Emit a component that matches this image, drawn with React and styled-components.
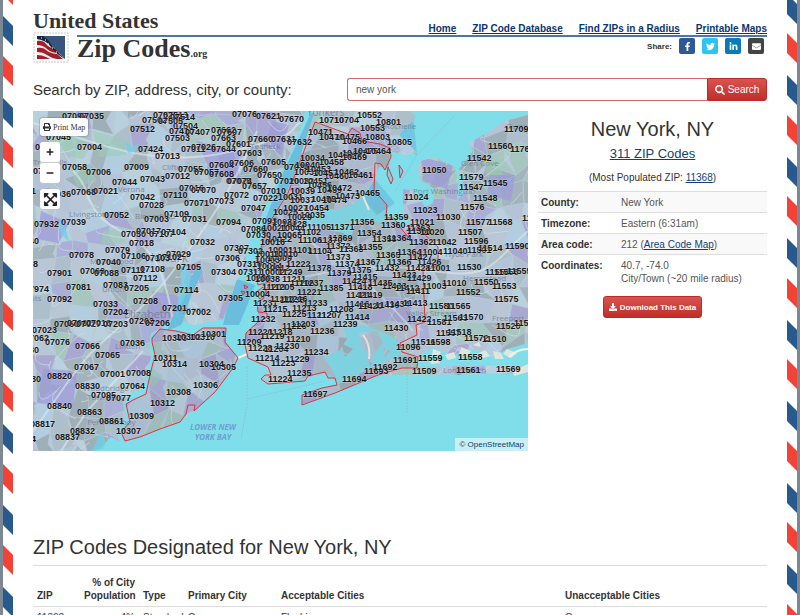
import React, { useState } from "react";
import styled, { createGlobalStyle } from "styled-components";
import {
  FaSearch,
  FaDownload,
  FaPrint,
  FaFacebookF,
  FaTwitter,
  FaLinkedinIn,
  FaEnvelope,
  FaPlus,
  FaMinus,
  FaExpandArrowsAlt,
} from "react-icons/fa";

const GlobalStyle = createGlobalStyle`
  * {
    box-sizing: border-box;
  }
  html {
    scrollbar-width: none;
  }
  body {
    margin: 0;
    background: #7b8793;
    color: #333;
    font-family: "Liberation Sans", Arial, sans-serif;
    font-size: 10px;
    line-height: 13px;
  }
  h1, h2, p {
    margin: 0;
    font-weight: normal;
  }
  a {
    color: #0f3f73;
  }
`;

// "zip x y" for every label on the map, x = left edge, y = baseline
const zips = `
07097 29 8,07035 46 8,07502 109 12,07522 120 7,07513 130 7,07514 137 9,07512 97 21,07503 132 30,07504 140 18,
07505 125 13,07410 136 23,07407 152 24,07662 178 22,07663 178 30,07045 13 29,07004 44 39,07424 105 41,07011 148 41,
07026 158 39,07644 178 41,07013 122 48,07054 2 39,07058 29 59,07006 53 64,07009 91 59,07055 145 61,07604 176 57,
07057 161 64,07608 176 66,07034 0 63,07044 79 74,07043 107 71,07012 132 68,07075 193 73,07981 -22 83,07936 13 86,
07068 38 84,07021 60 83,07042 97 89,07110 130 87,07016 146 80,07070 158 82,07028 106 97,07071 151 95,07073 176 93,
07052 71 107,07109 131 106,07003 111 111,07031 149 111,07094 183 114,07932 1 116,07039 28 114,07050 88 126,
07017 103 123,07107 116 126,07104 128 124,07018 96 135,07032 157 134,07940 -19 133,07078 36 147,07079 72 142,
07106 88 148,07029 133 146,07102 124 149,07103 112 150,07306 182 150,07928 -20 156,07901 14 165,07040 63 154,
07060 47 163,07088 61 165,07111 88 162,07108 107 161,07105 143 159,07304 178 164,07112 100 170,07974 -9 181,
07081 33 179,07083 70 177,07205 91 180,07114 141 182,07305 185 190,07092 14 191,07033 60 196,07208 100 193,
07204 70 204,07201 129 200,07002 153 204,07060 21 216,07062 34 215,07027 43 216,07016 53 215,07203 70 216,
07202 96 213,07206 112 215,07023 -1 222,07062 -9 230,07076 12 234,07066 42 238,07036 87 235,07065 62 247,
10303 129 230,10302 143 229,10310 157 229,10301 168 226,07080 -19 242,07067 41 259,07001 67 266,07008 93 265,
07080 -17 271,08820 14 268,08830 42 278,07064 87 278,07095 58 287,07077 73 290,08840 14 298,08863 44 304,
08861 66 313,08817 -3 316,08832 37 323,08837 22 329,10307 83 323,10309 96 308,10312 117 295,10308 133 284,
10306 160 277,10305 178 259,10304 166 256,10314 129 256,10311 120 250,08854 -22 331,07076 199 6,07621 223 8,
07670 246 11,10710 286 12,10704 301 12,10552 324 7,10553 327 20,07607 184 24,07660 215 31,07631 238 31,
07632 254 34,10471 275 24,10470 286 29,10475 302 29,10466 309 33,10803 332 29,07601 193 36,07603 204 45,
10463 295 47,10467 309 45,10469 309 49,10475 320 43,07606 196 55,07605 228 54,07024 251 59,10034 267 50,
10040 262 57,10458 286 54,07660 210 61,07650 224 67,10033 261 64,10453 273 61,10460 291 68,10457 280 65,
10462 301 64,10461 315 67,07074 194 73,07657 209 78,07020 241 73,10032 256 73,10451 270 73,10456 274 77,
07010 228 83,10039 257 83,10459 284 82,10472 294 80,10465 322 85,07072 191 87,07022 220 90,10031 245 89,
10037 257 92,10455 278 91,10474 289 92,10473 302 88,07047 208 100,10025 240 104,10027 250 100,10454 271 100,
10035 267 107,10029 254 109,07093 219 113,10023 239 114,10128 249 116,11105 274 119,11371 297 119,11356 317 114,
10801 343 14,10805 354 34,10464 333 43,11709 471 21,11560 455 38,11764 477 41,11542 434 50,
11050 389 62,11579 426 69,11547 426 79,11545 450 75,11548 440 90,11024 371 89,11576 427 99,11023 380 102,
11030 403 109,11359 351 109,11021 377 114,11577 433 114,11568 455 114,11360 348 117,11791 489 110,11363 373 120,
07086 208 121,07030 213 127,10021 229 120,10044 247 120,11102 264 124,11369 295 130,11370 285 132,11106 265 132,
10022 234 131,10065 244 127,11354 324 125,07307 191 140,07302 205 143,10001 235 142,10016 227 134,11101 255 142,
11104 275 143,11372 293 138,11368 306 141,11355 325 139,07310 204 156,10003 222 152,10009 234 150,10011 222 146,
10010 240 146,10014 224 158,10012 232 160,11222 253 156,11373 293 149,11374 302 156,11367 323 154,11378 274 160,
11375 314 162,11379 294 165,07311 205 164,10002 227 164,11249 245 164,10280 213 170,10038 222 171,11211 249 171,
11206 257 175,11237 266 175,11201 229 179,11205 237 179,11221 264 184,11385 286 180,11418 315 179,11415 320 169,
11424 309 173,11421 313 187,11419 325 187,10004 212 186,11231 220 195,11217 237 191,11238 247 192,11216 250 191,
11233 270 195,11215 230 201,11213 259 200,11225 249 206,11212 274 207,11207 284 207,11208 296 201,11414 312 209,
11416 312 196,11420 325 198,11232 218 211,11226 249 218,11203 258 216,11239 300 216,11236 277 223,11220 215 224,
11218 235 224,11219 227 228,11210 253 231,11209 204 234,11361 374 123,11020 387 124,11507 425 124,11358 339 131,
11364 354 130,11362 376 134,11042 399 134,11596 431 133,11590 472 138,11365 343 147,11364 364 144,11004 385 144,
11040 410 143,11501 434 142,11514 445 140,11366 354 154,11426 384 154,11427 375 149,11432 342 160,11423 359 167,
11428 373 160,11001 393 160,11530 424 159,11554 452 164,11556 461 164,11555 474 163,11429 374 170,11003 389 178,
11010 409 175,11550 441 174,11553 459 178,11433 349 178,11435 335 175,11412 362 180,11411 373 183,11552 423 184,
11575 461 191,11436 342 197,11434 352 196,11413 370 195,11580 396 198,11565 413 198,11422 374 211,11581 394 214,
11563 410 210,11570 426 209,11520 463 218,11566 481 215,11430 351 220,11557 403 225,11518 414 224,11572 431 230,
11510 449 231,11516 378 234,11598 393 234,11228 215 240,11204 231 241,11230 242 238,11234 271 244,11214 222 250,
11223 238 255,11229 252 251,11235 254 265,11224 235 271,11697 270 286,11694 309 271,11693 331 263,11692 340 259,
11691 360 252,11559 385 250,11558 425 249,11561 423 262,11569 463 261,11509 379 263,11096 363 239`
  .split(",")
  .map((z) => z.trim().split(" "));

const places = [
  ["Clifton", 129, 59, 8],
  ["Livingston", 36, 106, 8],
  ["Verona", 85, 81, 8],
  ["Bloomfield", 102, 108, 8],
  ["Newark", 112, 151, 12],
  ["Maplewood", 57, 153, 8],
  ["Union", 69, 181, 8],
  ["Elizabeth", 91, 207, 11],
  ["Linden", 82, 238, 8],
  ["Woodbridge", 50, 280, 8],
  ["Township", 54, 289, 8],
  ["Perth Amboy", 54, 314, 8],
  ["Troy Hills", 0, 54, 8],
  ["Heights", -20, 190, 8],
  ["Teaneck", 217, 38, 8],
  ["Yonkers", 274, 5, 10],
  ["New Rochelle", 333, 18, 8],
  ["Glen Cove", 428, 55, 8],
  ["Port Washington", 380, 83, 8],
  ["Oyster Bay", 473, 18, 8],
  ["Hyde Park", 412, 146, 8],
  ["Hempstead", 430, 170, 8],
  ["Valley Stream", 373, 205, 8],
  ["Freeport", 459, 210, 8],
  ["Long Beach", 410, 262, 8],
  ["Bayonne", 140, 201, 8],
];

const land = [
  // New Jersey
  "M0 0H272L264 28 244 70 224 114 212 140 214 158 203 170 197 190 190 208 160 214 150 210 158 185 170 160 164 156 150 180 140 205 130 216 118 222 116 236 118 246 114 262 109 277 96 284 90 292 93 310 84 320 86 330 78 326 68 336 60 340H0Z",
  // Staten Island
  "M119 231L122 244 117 264 113 283 100 289 93 293 97 311 88 321 92 330 107 326 127 318 147 311 155 302 163 299 182 281 200 257 205 247 192 231 193 217 170 217 160 224 143 220 127 218 119 227Z",
  // Manhattan, the Bronx and Westchester
  "M282 0H378L384 7 372 16 366 24 384 42 372 44 350 38 357 42 356 56 346 56 341 70 334 78 322 92 306 98 288 98 272 106 258 132 244 158 230 172 222 168 224 150 236 116 260 68Z",
  // Long Island
  "M262 118L278 112 292 118 310 122 318 128 322 112 334 108 347 112 356 107 367 116 378 112 370 100 370 78 382 80 392 96 400 92 402 78 388 70 385 58 388 50 402 46 422 56 425 68 424 90 432 80 426 58 440 40 436 32 454 22 472 10 495 4V232L474 238 460 246 440 238 420 244 400 236 384 246V256L495 254V262L384 264 345 264 302 282 270 293 270 283 304 274 340 256 368 244 368 232 356 224 330 214 310 216 314 228 306 240 290 246 296 254 304 268 292 262 275 266 235 273 228 268 232 263 237 262 232 255 216 247 212 234 213 222 225 211 225 195 230 184 237 168 250 146Z",
  "M326 222L344 220 350 232 340 244 330 238ZM336 240L340 248 338 256 334 246ZM308 232L320 238 312 246ZM350 236L358 240 352 246Z",
].join("");

const cityLimits =
  "M282 11L315 23 319 17 327 22 329 30 347 33 357 37 358 46 352 59 348 53 342 52 341 79 347 86 354 94 353 107 361 107 367 116 375 126 377 114 388 120 405 136V149L402 156 390 159 392 211 383 214 384 224 367 232 369 241 385 246 384 257 369 257 345 264 302 282 269 294V284L289 277 304 274 302 267 295 267 292 261 275 265 272 270 235 273 228 268 232 264 238 264 235 256 215 247 212 234 213 222 225 211 234 206V202L225 201 224 191 230 188 237 171 225 174 221 157 229 134 235 114 255 82Z" +
  "M119 231L122 244 117 264 113 283 100 289 93 293 97 311 88 321 92 330 107 326 127 318 147 311 153 303 155 294 162 294 161 300 182 281 200 257 205 247 192 231 193 217 170 217 160 224 143 220 127 218 119 227Z" +
  "M355 56L360 68 358 73 354 64ZM366 54L370 60 367 67ZM222 182l8 -6 4 6 -7 6ZM211 174l4 2 -3 2ZM208 180l4 1 -2 3Z";

const shades = ["#a9afd6", "#a3b4bd", "#b3cde0", "#b9d0dd", "#9eafb8", "#b8c6d5", "#a8a8d2", "#a6c6c0", "#adbfca", "#b4c3d6"];

// patchwork of zip areas: a jittered grid, always the same
const rand = (a, b) => {
  const n = Math.sin(a * 127.1 + b * 311.7) * 43758.5453;
  return n - Math.floor(n);
};
const CELL = 19;
const corner = (c, r) =>
  `${Math.round(c * CELL + (rand(c, r) - 0.5) * 17)} ${Math.round(r * CELL + (rand(r + 40, c) - 0.5) * 17)}`;
const areas = [];
for (let r = -1; r < 19; r++) {
  for (let c = -1; c < 28; c++) {
    areas.push({
      d: `M${corner(c, r)}L${corner(c + 1, r)}L${Math.round((c + 1 + (rand(c, r + 9) - 0.5) / 2) * CELL)} ${Math.round((r + 0.5) * CELL)}L${corner(c + 1, r + 1)}L${corner(c, r + 1)}Z`,
      fill: shades[Math.floor(rand(c + 7, r + 3) * shades.length)],
    });
  }
}
const streets = [];
for (let i = 0; i < 190; i++) {
  const x = Math.round(rand(i, 1) * 495);
  const y = Math.round(rand(i, 2) * 340);
  streets.push(
    `M${x} ${y}q${Math.round(rand(i, 3) * 30 - 15)} ${Math.round(rand(i, 4) * 20)} ${Math.round(rand(i, 5) * 60 - 30)} ${Math.round(rand(i, 6) * 40 - 10)}`
  );
}

const ZipMap = () => (
  <MapSvg viewBox="0 0 495 340" role="img" aria-label="Map of New York ZIP Codes">
    <defs>
      <clipPath id="land">
        <path d={land} />
      </clipPath>
    </defs>
    <rect width="495" height="340" fill="#80deea" />
    <path d="M204 168L222 174 214 195 206 214 190 214 194 196ZM160 158L172 158 158 196 148 214 134 220 142 200ZM250 62L278 2 288 2 262 70 236 120 228 120Z" fill="#62afd9" opacity="0.7" />
    <path d="M380 4L384 44 356 34ZM342 68L330 88 344 104 362 92Z" fill="#6fc7e2" />
    <g clipPath="url(#land)">
      <rect width="495" height="340" fill="#b6cbd8" />
      {areas.map((a, i) => (
        <path key={i} d={a.d} fill={a.fill} stroke="#b9cbd9" strokeWidth="0.6" />
      ))}
      <path d="M24 30l20 -8 14 14 -8 12 -20 -4ZM60 20l30 8 4 16 -28 2ZM38 60l18 -6 8 16 -20 6ZM150 10l24 -4 -2 18 -20 4ZM70 120l20 -4 2 16 -24 2ZM112 266l8 -8 10 8 -10 10ZM450 50l14 -4 6 18 -14 6Z" fill="#9bcbb4" opacity="0.6" />
      <path d="M8 100l28 12 -10 20 -22 -4ZM164 30l36 10 8 30 -30 -8ZM120 180l28 6 -12 32 -24 -12ZM10 258l34 2 -4 36 -36 -4ZM240 10l16 4 -8 30 -18 -8ZM388 46l32 8 -6 24 -24 -8ZM456 64l26 0 -4 26 -24 -6Z" fill="#9d9bd8" opacity="0.75" />
      <path d={streets.join("")} fill="none" stroke="#d5e2ea" strokeWidth="1" opacity="0.6" />
      <path d="M40 60C60 78 50 100 84 118S130 150 140 210M0 12C60 30 120 60 200 40S250 20 270 10M0 320C30 280 40 260 60 240S110 200 140 160 200 80 224 20M250 170C300 160 340 150 400 160S460 150 495 120M240 110C280 130 340 170 380 220M28 340L54 300 110 240" fill="none" stroke="#dfe9ee" strokeWidth="2" opacity="0.6" />
    </g>
    <path d="M92 30l8 6 6 -4 -3 8 -8 2ZM26 108l6 8 4 14 -8 -6ZM66 322q10 6 4 16l-12 2q6 -8 8 -18ZM150 150q14 12 2 36t-10 30" fill="#6fd0e6" opacity="0.8" />
    <g fill="#dce8dd">
      <path d="M400 238l8 3 -3 5 -6 -2ZM412 244l9 -3 2 6 -8 2ZM428 236l10 4 -4 6 -8 -3ZM444 243l8 -4 5 6 -10 3ZM460 240l8 2 3 6 -9 0ZM474 238l10 4 -6 5 -8 -4ZM440 234l6 -3 2 5ZM396 250l10 -1 1 3 -8 1ZM480 260l15 -7 0 8 -14 4Z" />
    </g>
    <path d="M205 247L214 243M330 224q8 10 6 24M476 246q8 -8 19 -8M330 85l6 14" fill="none" stroke="#f4f1e6" strokeWidth="2" />
    <path d="M214 256V294L208 328M214 288L292 270M374 252V302M362 80L384 44 420 6" fill="none" stroke="#85b9c6" strokeDasharray="2 1" strokeWidth="0.6" />
    <PlaceNames>
      {places.map(([name, x, y, size]) => (
        <text key={name} x={x} y={y} fontSize={size}>
          {name}
        </text>
      ))}
    </PlaceNames>
    <BayName textAnchor="middle">
      <text x="180" y="319">LOWER NEW</text>
      <text x="180" y="329">YORK BAY</text>
    </BayName>
    <path d={cityLimits} fill="rgba(110, 110, 140, 0.1)" stroke="#e0303c" strokeWidth="1" strokeLinejoin="round" />
    <ZipLabels>
      {zips.map(([zip, x, y], i) => (
        <text key={i} x={x} y={y}>
          {zip}
        </text>
      ))}
    </ZipLabels>
  </MapSvg>
);

const AirmailEdge = ({ id, blue, red }) => (
  <Edge aria-hidden="true">
    <defs>
      <pattern id={id} width="10" height="163" patternUnits="userSpaceOnUse">
        {[-163, -81, 0, 82, 163].map((y) => (
          <g key={y}>
            <path d={`M0 ${y + blue}l10 10v20l-10 -10Z`} fill="#285a8e" />
            <path d={`M0 ${y + red}l10 10v20l-10 -10Z`} fill="#f44336" />
          </g>
        ))}
      </pattern>
    </defs>
    <rect width="10" height="100%" fill={`url(#${id})`} />
  </Edge>
);

const Stamp = () => (
  <StampSvg viewBox="0 0 36 31" aria-hidden="true">
    <rect x="1" y="1" width="34" height="29" fill="#fff" stroke="#c9c9c9" strokeWidth="1" strokeDasharray="2 1" />
    <clipPath id="stamp">
      <rect x="4" y="4" width="28" height="23" />
    </clipPath>
    <g clipPath="url(#stamp)">
      <rect x="4" y="4" width="28" height="23" fill="#36567e" />
      <path d="M4 4q6 -1 10 4q7 8 18 19H4Z" fill="#f3ece8" />
      <path d="M4 9q6 -1 9 3t10 5l3 4q-8 0 -12 -4t-10 -4ZM4 16q6 -1 9 2t11 4l6 5h-6q-6 -1 -10 -4t-10 -3ZM4 23q5 0 9 2l4 2H4Z" fill="#a51d2b" />
      <path d="M4 4h6q5 3 8 8t14 15q-9 -5 -14 -12T4 7Z" fill="#17253f" />
      <path d="M8 6h1M12 8h1M15 12h1M19 16h1M23 20h1" stroke="#fff" strokeWidth="1" />
    </g>
  </StampSvg>
);

const App = () => {
  const [query, setQuery] = useState("new york");

  return (
    <Page>
      <GlobalStyle />
      <AirmailEdge id="edge-left" blue={16} red={56} />
      <Main>
        <header>
          <TopRow>
            <BrandTop>United States</BrandTop>
            <Nav>
              <a href="#home">Home</a>
              <a href="#database">ZIP Code Database</a>
              <a href="#radius">Find ZIPs in a Radius</a>
              <a href="#maps">Printable Maps</a>
            </Nav>
          </TopRow>
          <BrandRow>
            <Stamp />
            <UnderLine>
              <BrandName>
                Zip Codes<small>.org</small>
              </BrandName>
              <Share>
                <span>Share:</span>
                <ShareLink href="#facebook" color="#305891" aria-label="Facebook">
                  <FaFacebookF />
                </ShareLink>
                <ShareLink href="#twitter" color="#2cc4f1" aria-label="Twitter">
                  <FaTwitter />
                </ShareLink>
                <ShareLink href="#linkedin" color="#0a7bb6" aria-label="LinkedIn">
                  <FaLinkedinIn />
                </ShareLink>
                <ShareLink href="#email" color="#444444" aria-label="Email">
                  <FaEnvelope />
                </ShareLink>
              </Share>
            </UnderLine>
          </BrandRow>
        </header>

        <SearchForm onSubmit={(e) => e.preventDefault()}>
          <label htmlFor="q">Search by ZIP, address, city, or county:</label>
          <SearchGroup>
            <input id="q" type="text" value={query} onChange={(e) => setQuery(e.target.value)} />
            <button type="submit">
              <FaSearch /> Search
            </button>
          </SearchGroup>
        </SearchForm>

        <Columns>
          <MapBox>
            <ZipMap />
            <MapControls>
              <PrintButton type="button">
                <FaPrint /> Print Map
              </PrintButton>
              <ZoomGroup>
                <MapButton type="button" aria-label="Zoom in">
                  <FaPlus />
                </MapButton>
                <MapButton type="button" aria-label="Zoom out">
                  <FaMinus />
                </MapButton>
              </ZoomGroup>
              <MapButton type="button" aria-label="Full screen" $big>
                <FaExpandArrowsAlt />
              </MapButton>
            </MapControls>
            <Attribution>
              © <a href="#osm">OpenStreetMap</a>
            </Attribution>
          </MapBox>

          <Info>
            <Title>New York, NY</Title>
            <Count>
              <a href="#zips">311 ZIP Codes</a>
            </Count>
            <Populated>
              (Most Populated ZIP: <a href="#11368">11368</a>)
            </Populated>
            <Facts>
              <tbody>
                <tr>
                  <th scope="row">County:</th>
                  <td>New York</td>
                </tr>
                <tr>
                  <th scope="row">Timezone:</th>
                  <td>Eastern (6:31am)</td>
                </tr>
                <tr>
                  <th scope="row">Area code:</th>
                  <td>
                    212 (<a href="#area">Area Code Map</a>)
                  </td>
                </tr>
                <tr>
                  <th scope="row">Coordinates:</th>
                  <td>
                    40.7, -74.0
                    <br />
                    City/Town (~20 mile radius)
                  </td>
                </tr>
              </tbody>
            </Facts>
            <Download type="button">
              <FaDownload /> Download This Data
            </Download>
          </Info>
        </Columns>

        <ListTitle>ZIP Codes Designated for New York, NY</ListTitle>
        <ZipTable>
          <colgroup>
            <Col $w={47} />
            <Col $w={59} />
            <Col $w={45} />
            <Col $w={93} />
            <Col $w={284} />
            <col />
          </colgroup>
          <thead>
            <tr>
              <th>ZIP</th>
              <th className="num">% of City Population</th>
              <th>Type</th>
              <th>Primary City</th>
              <th>Acceptable Cities</th>
              <th>Unacceptable Cities</th>
            </tr>
          </thead>
          <tbody>
            <tr>
              <td>
                <a href="#11368">11368</a>
              </td>
              <td className="num">4%</td>
              <td>Standard</td>
              <td>Corona</td>
              <td>Flushing</td>
              <td>Queens</td>
            </tr>
          </tbody>
        </ZipTable>
      </Main>
      <AirmailEdge id="edge-right" blue={75} red={33} />
    </Page>
  );
};

const Page = styled.div`
  display: flex;
  min-height: 100vh;
  margin: 0 3px;
  background: #fff;
`;
const Edge = styled.svg`
  flex: none;
  align-self: stretch;
  width: 10px;
  height: auto;
`;
const Main = styled.main`
  flex: 1;
  min-width: 0;
  padding: 0 20px;
`;
const TopRow = styled.div`
  display: flex;
  justify-content: space-between;
  align-items: flex-end;
  height: 35px;
`;
const BrandTop = styled.div`
  padding-bottom: 3px;
  font-family: "Liberation Serif", "Times New Roman", serif;
  font-size: 22px;
  font-weight: bold;
  line-height: 22px;
`;
const Nav = styled.nav`
  display: flex;
  gap: 16px;
  font-weight: bold;
  font-size: 10px;
  a {
    color: #0b3672;
  }
`;
const BrandRow = styled.div`
  display: flex;
  gap: 8px;
  height: 28px;
`;
const StampSvg = styled.svg`
  flex: none;
  width: 36px;
  height: 31px;
  margin-top: -3px;
`;
const UnderLine = styled.div`
  flex: 1;
  display: flex;
  justify-content: space-between;
  align-items: flex-start;
  border-top: 2px solid #4a76a8;
`;
const BrandName = styled.div`
  font-family: "Liberation Serif", "Times New Roman", serif;
  font-size: 26px;
  font-weight: bold;
  line-height: 24px;
  small {
    font-size: 10px;
  }
`;
const Share = styled.div`
  display: flex;
  align-items: center;
  gap: 7px;
  padding: 1px 3px 0 0;
  font-size: 8px;
  font-weight: bold;
`;
const ShareLink = styled.a`
  display: flex;
  align-items: center;
  justify-content: center;
  width: 16px;
  height: 16px;
  border-radius: 2px;
  background: ${(p) => p.color};
  color: #fff;
  font-size: 9px;
`;
const SearchForm = styled.form`
  display: grid;
  grid-template-columns: 314fr 420fr;
  align-items: center;
  margin-top: 15px;
  label {
    font-size: 15px;
    line-height: 23px;
  }
`;
const SearchGroup = styled.div`
  display: flex;
  height: 23px;
  input {
    flex: 1;
    min-width: 0;
    padding: 0 8px;
    border: 1px solid #cf6b69;
    border-right: none;
    border-radius: 3px 0 0 3px;
    outline: none;
    color: #555;
    font-family: inherit;
    font-size: 10px;
  }
  button {
    display: flex;
    align-items: center;
    justify-content: center;
    gap: 3px;
    width: 60px;
    padding: 0;
    border: 1px solid #b92c28;
    border-radius: 0 3px 3px 0;
    background: linear-gradient(#d9534f, #c12e2a);
    color: #fff;
    font-family: inherit;
    font-size: 10px;
  }
`;
const Columns = styled.div`
  display: grid;
  grid-template-columns: 495fr 229fr;
  gap: 10px;
  align-items: start;
  margin-top: 10px;
`;
const MapBox = styled.div`
  position: relative;
  overflow: hidden;
`;
const MapSvg = styled.svg`
  display: block;
  width: 100%;
  height: auto;
`;
const ZipLabels = styled.g`
  font-size: 9px;
  font-weight: bold;
  fill: #161616;
  stroke: rgba(255, 255, 255, 0.35);
  stroke-width: 1px;
  paint-order: stroke;
`;
const PlaceNames = styled.g`
  font-family: "Open Sans", "Noto Sans", sans-serif;
  fill: #6f7a94;
  opacity: 0.8;
`;
const BayName = styled.g`
  font-family: "Open Sans", "Noto Sans", sans-serif;
  font-size: 8px;
  font-style: italic;
  font-weight: bold;
  fill: #6f9fd0;
`;
const MapControls = styled.div`
  position: absolute;
  top: 7px;
  left: 7px;
  display: flex;
  flex-direction: column;
  align-items: flex-start;
  gap: 6px;
`;
const PrintButton = styled.button`
  display: flex;
  align-items: center;
  gap: 2px;
  height: 18px;
  padding: 0 3px;
  border: none;
  border-radius: 3px;
  background: #fff;
  box-shadow: 0 0 1px 1px rgba(0, 0, 0, 0.15);
  color: #333;
  font-family: "Liberation Serif", "Times New Roman", serif;
  font-size: 8px;
  svg {
    width: 8px;
  }
`;
const ZoomGroup = styled.div`
  display: flex;
  flex-direction: column;
  gap: 1px;
  border-radius: 3px;
  background: #ccc;
`;
const MapButton = styled.button`
  display: flex;
  align-items: center;
  justify-content: center;
  width: 20px;
  height: 20px;
  padding: 0;
  border: none;
  border-radius: 3px;
  background: #fff;
  color: #222;
  font-size: ${(p) => (p.$big ? "15px" : "8px")};
`;
const Attribution = styled.div`
  position: absolute;
  right: 0;
  bottom: 0;
  padding: 0 4px;
  background: rgba(255, 255, 255, 0.55);
  font-size: 8px;
  a {
    color: #0f3f73;
    text-decoration: none;
  }
`;
const Info = styled.section`
  display: flex;
  flex-direction: column;
  align-items: center;
`;
const Title = styled.h1`
  margin-top: 6px;
  font-size: 20px;
  line-height: 24px;
`;
const Count = styled.p`
  margin-top: 5px;
  font-size: 13px;
  line-height: 16px;
`;
const Populated = styled.p`
  margin: 9px 0 7px;
`;
const Facts = styled.table`
  width: 100%;
  border-collapse: collapse;
  th,
  td {
    padding: 4px 3px 3px;
    border-top: 1px solid #ddd;
    text-align: left;
    vertical-align: top;
  }
  th {
    width: 80px;
  }
  td {
    color: #555;
  }
  tr:nth-child(odd) {
    background: #f9f9f9;
  }
  tr:last-child {
    background: none;
  }
`;
const Download = styled.button`
  display: flex;
  align-items: center;
  justify-content: center;
  gap: 3px;
  width: 99px;
  height: 22px;
  margin-top: 8px;
  padding: 0;
  border: 1px solid #b92c28;
  border-radius: 3px;
  background: linear-gradient(#d9534f, #c12e2a);
  color: #fff;
  font-family: inherit;
  font-size: 8px;
  font-weight: bold;
`;
const ListTitle = styled.h2`
  margin-top: 84px;
  padding-bottom: 6px;
  border-bottom: 1px solid #ddd;
  font-size: 20px;
  line-height: 24px;
`;
const ZipTable = styled.table`
  width: 100%;
  margin-top: 6px;
  border-collapse: collapse;
  table-layout: fixed;
  th,
  td {
    padding: 4px;
    text-align: left;
    vertical-align: bottom;
    white-space: nowrap;
  }
  th {
    border-bottom: 1px solid #ddd;
  }
  .num {
    text-align: right;
    white-space: normal;
  }
`;
const Col = styled.col`
  width: ${(p) => p.$w}px;
`;

export default App;
